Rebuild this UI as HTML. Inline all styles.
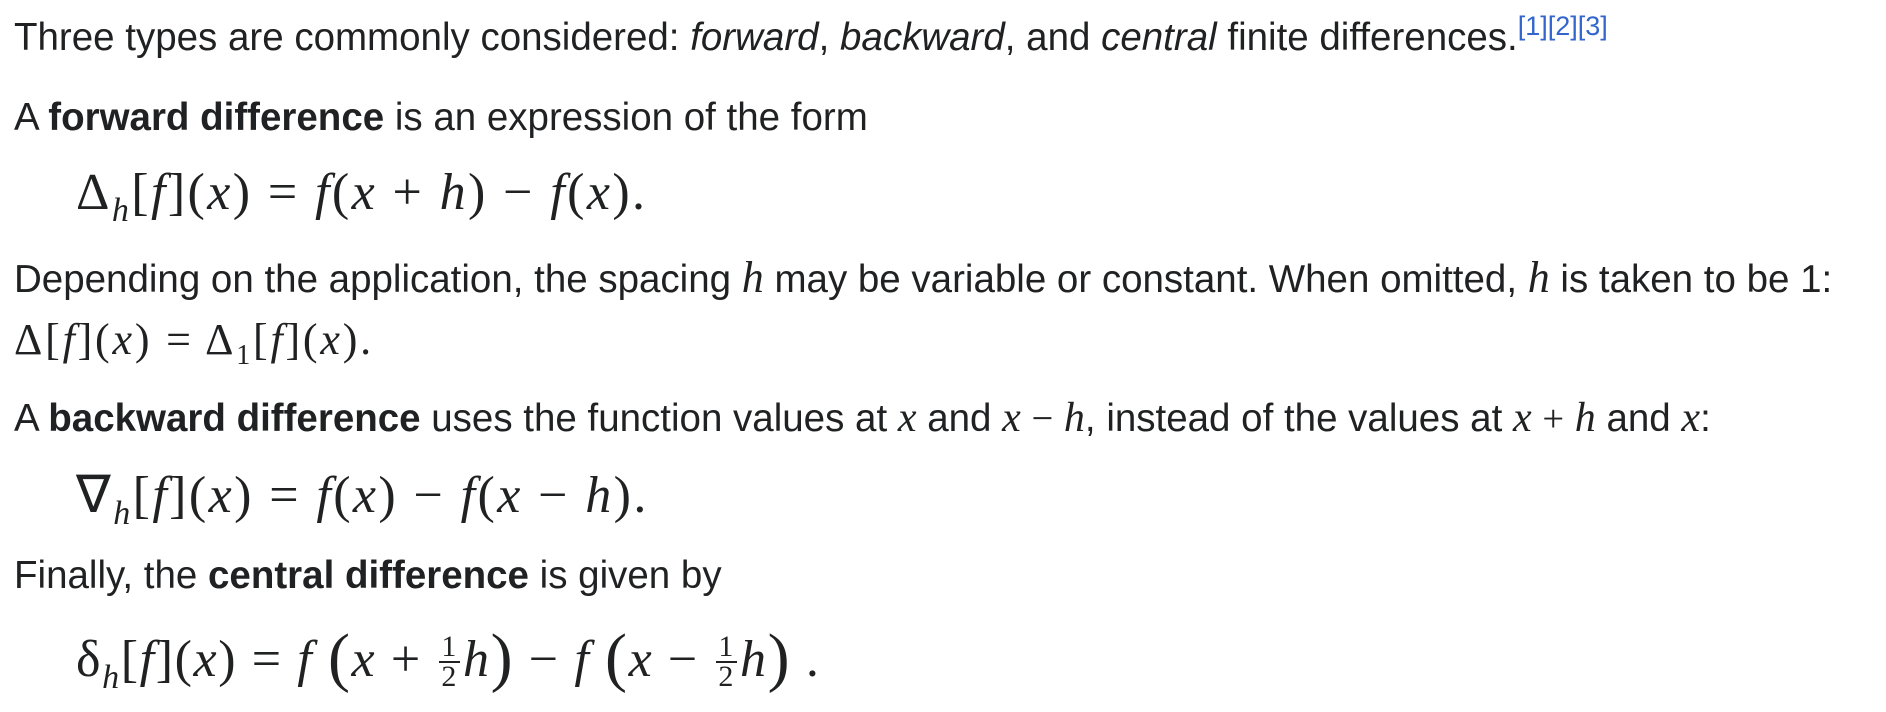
<!DOCTYPE html>
<html><head><meta charset="utf-8"><style>
body{margin:0;background:#fff;width:1886px;height:712px;overflow:hidden;color:#202122;font-family:"Liberation Sans",sans-serif;font-size:38.5px}
.l{position:absolute;left:14px;white-space:nowrap;line-height:44px}
.m{position:absolute;left:76px;white-space:nowrap;font-family:"Liberation Serif",serif;font-size:52px;line-height:56px;letter-spacing:2.4px}
i.v{font-family:"Liberation Serif",serif;font-style:italic}
.s{font-family:"Liberation Serif",serif}
sup.r{font-size:27px;color:#3366cc;vertical-align:0;position:relative;top:-15px}
.sub{font-size:34px;font-style:italic;position:relative;top:12px}
.fr{display:inline-block;vertical-align:middle;text-align:center;font-size:30px;line-height:28px;margin:0 3px;position:relative;top:-2px}
.fr span{display:block;padding:0 2px}
.fr span:first-child{border-bottom:2px solid #202122}
.big{font-size:66px;position:relative;top:3px}
</style></head><body>
<div class="l" style="top:16px">Three types are commonly considered: <i>forward</i>, <i>backward</i>, and <i>central</i> finite differences.<sup class="r">[1][2][3]</sup></div>
<div class="l" style="top:96px">A <b>forward difference</b> is an expression of the form</div>
<div class="m" style="top:165px">Δ<span class="sub">h</span>[<i>f</i>](<i>x</i>) = <i>f</i>(<i>x</i> + <i>h</i>) − <i>f</i>(<i>x</i>).</div>
<div class="l" style="top:256px">Depending on the application, the spacing <i class="v" style="font-size:44px">h</i> may be variable or constant. When omitted, <i class="v" style="font-size:44px">h</i> is taken to be 1:</div>
<div class="l s" style="top:318px;font-size:44px;letter-spacing:2.8px">Δ[<i>f</i>](<i>x</i>) = Δ<sub style="font-size:28px">1</sub>[<i>f</i>](<i>x</i>).</div>
<div class="l" style="top:396px">A <b>backward difference</b> uses the function values at <i class="v" style="font-size:42px">x</i> and <i class="v" style="font-size:42px">x</i> <span class="s">−</span> <i class="v" style="font-size:42px">h</i>, instead of the values at <i class="v" style="font-size:42px">x</i> <span class="s">+</span> <i class="v" style="font-size:42px">h</i> and <i class="v" style="font-size:42px">x</i>:</div>
<div class="m" style="top:468px">∇<span class="sub">h</span>[<i>f</i>](<i>x</i>) = <i>f</i>(<i>x</i>) − <i>f</i>(<i>x</i> − <i>h</i>).</div>
<div class="l" style="top:554px">Finally, the <b>central difference</b> is given by</div>
<div class="m" style="top:627px;letter-spacing:1.6px">δ<span class="sub">h</span>[<i>f</i>](<i>x</i>) = <i>f</i> <span class="big">(</span><i>x</i> + <span class="fr"><span>1</span><span>2</span></span><i>h</i><span class="big">)</span> − <i>f</i> <span class="big">(</span><i>x</i> − <span class="fr"><span>1</span><span>2</span></span><i>h</i><span class="big">)</span> .</div>
</body></html>
